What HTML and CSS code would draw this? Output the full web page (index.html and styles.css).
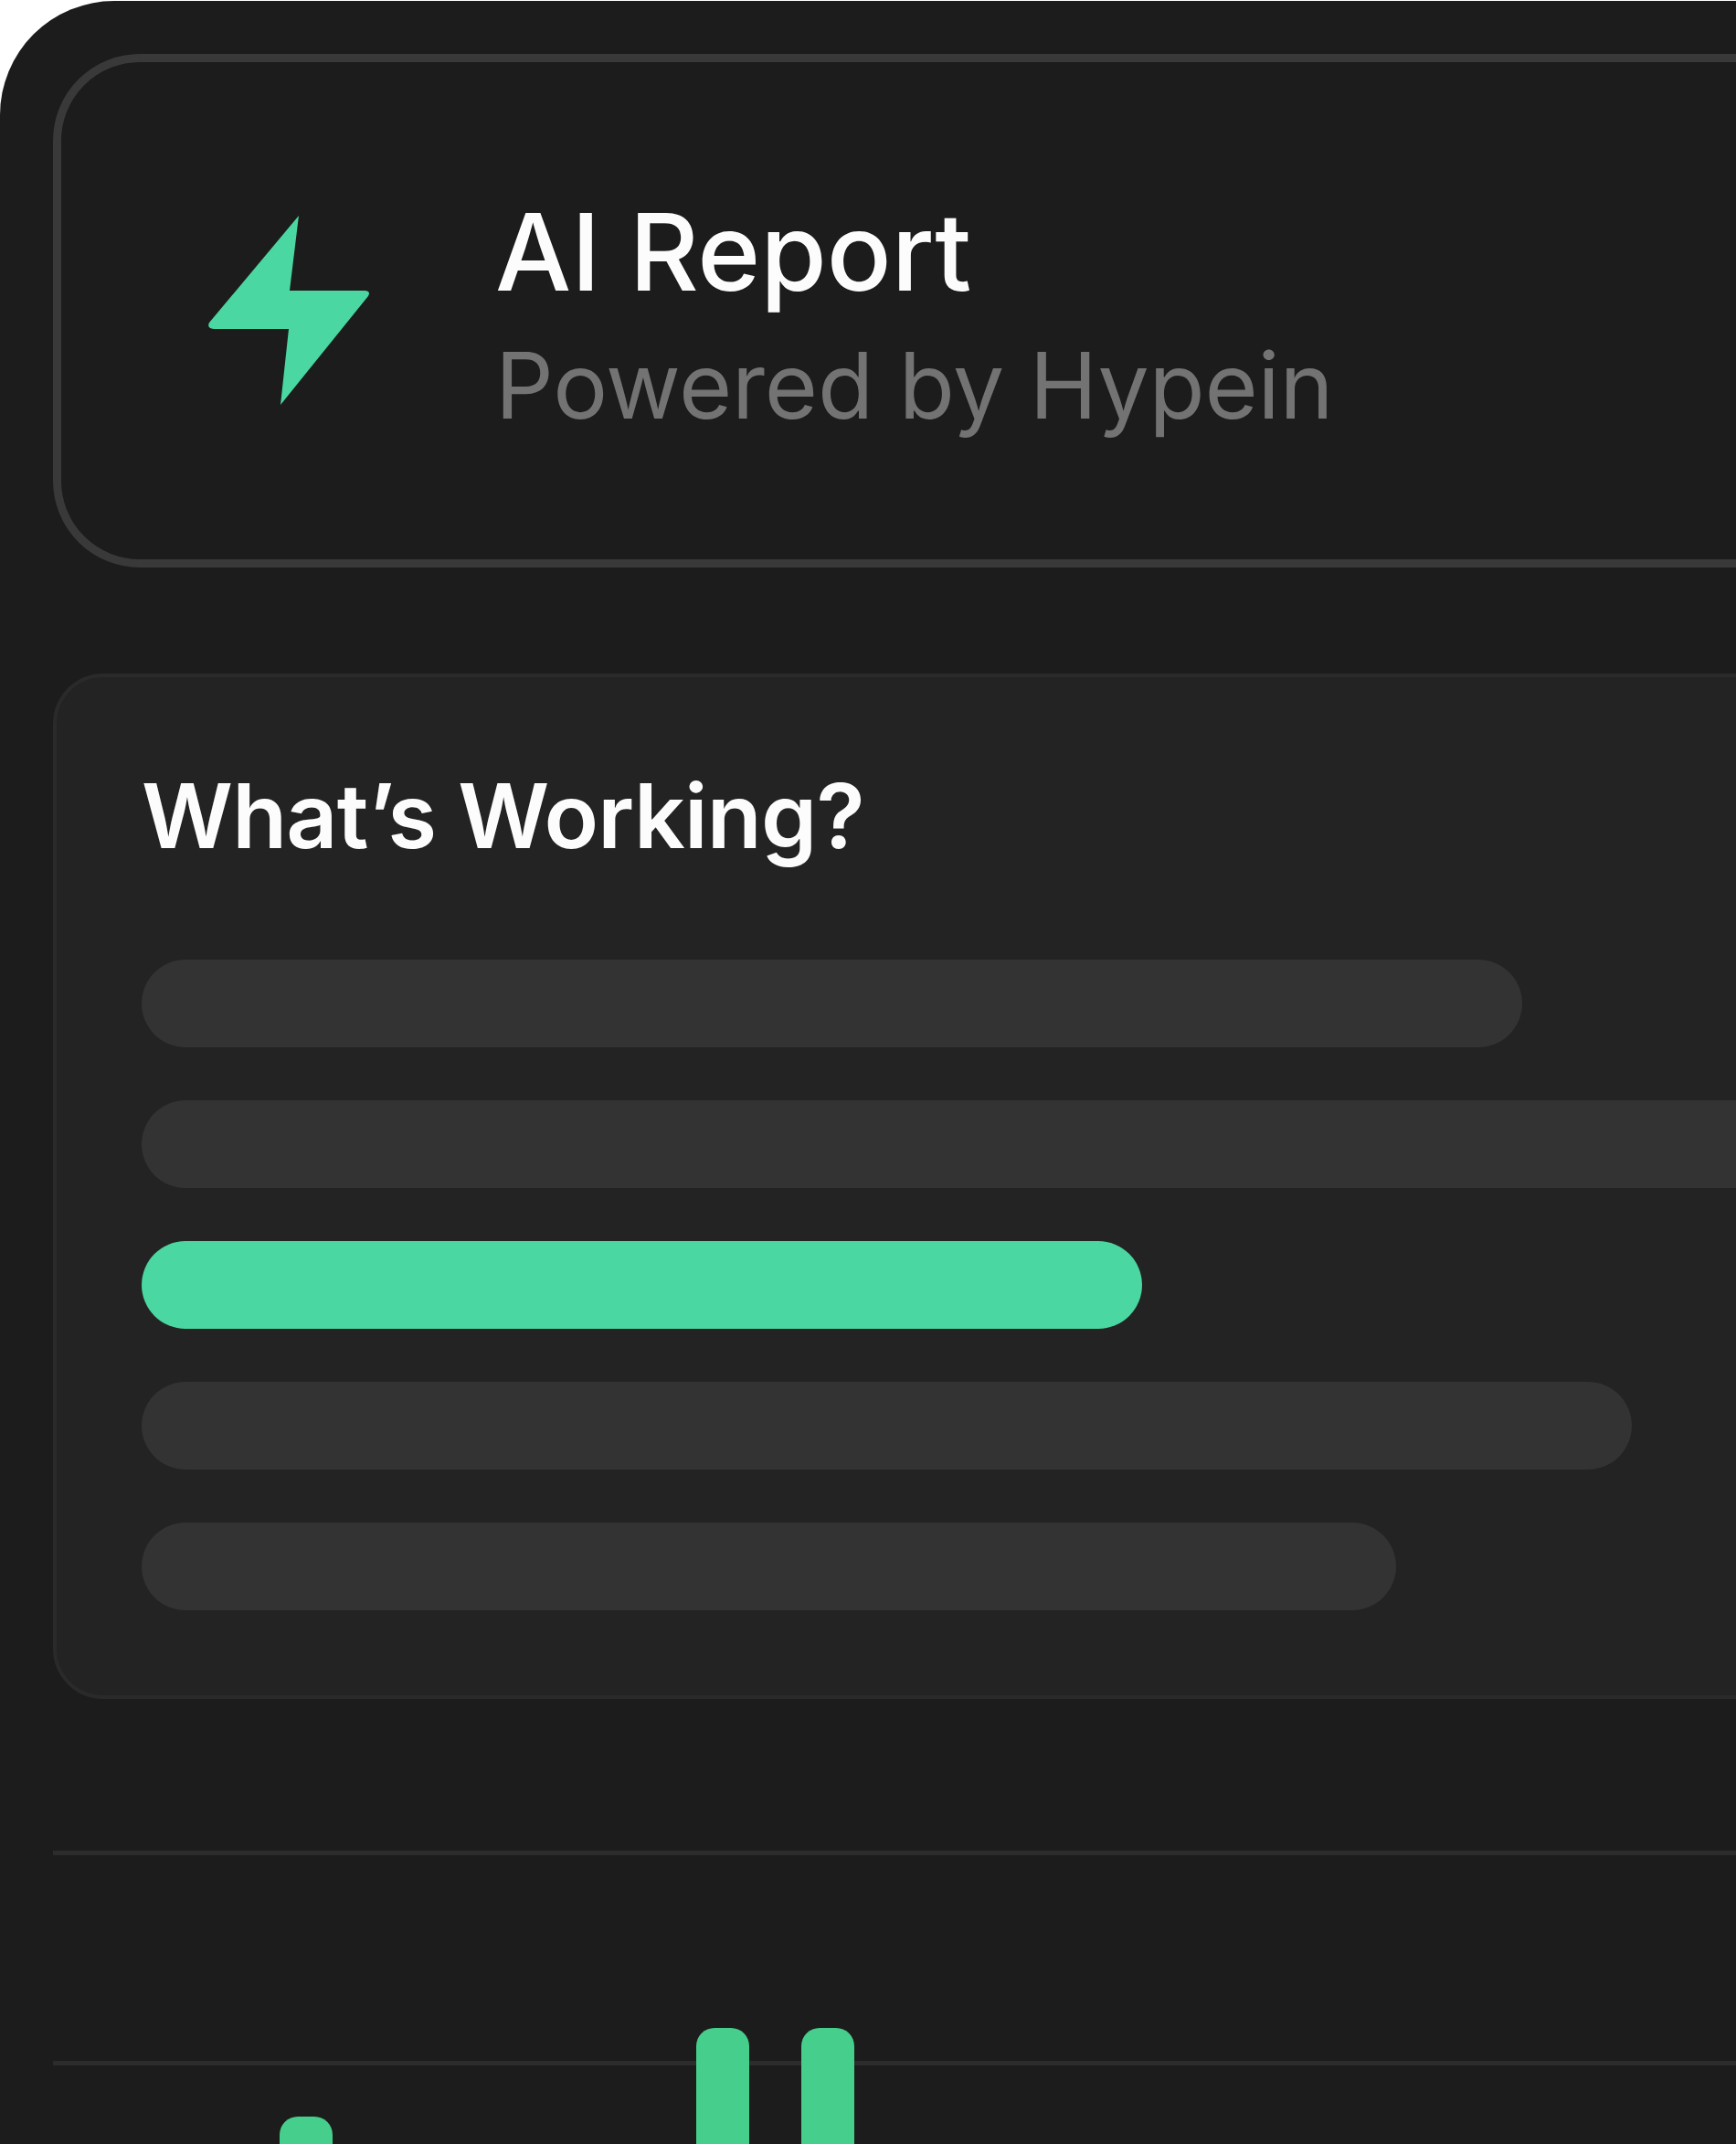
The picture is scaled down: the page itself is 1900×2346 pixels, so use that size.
FILE: index.html
```html
<!DOCTYPE html>
<html>
<head>
	<meta charset="utf-8">
	<meta name="viewport" content="width=device-width, initial-scale=1">
	<title>AI Report</title>

	<link rel="stylesheet" href="styles.css">
</head>
<body>

	<section class="panel">

		<div class="report-head">
			<svg class="bolt" viewBox="0 0 176 207" aria-hidden="true">
				<path d="M99 0 L89 82 L172 82 Q178 83 175 88 L79 207 L88 124 L6 124 Q-2 123 1 117 Z"/>
			</svg>
			<div class="report-title">
				<h1>AI Report</h1>
				<p>Powered by Hypein</p>
			</div>
		</div>

		<div class="working">
			<h2>What’s Working?</h2>
			<div class="working-bars">
				<div class="bar bar-1"></div>
				<div class="bar bar-2"></div>
				<div class="bar bar-3 active"></div>
				<div class="bar bar-4"></div>
				<div class="bar bar-5"></div>
			</div>
		</div>

		<div class="chart">
			<div class="chart-line"></div>
			<div class="chart-line"></div>
			<div class="chart-cols">
				<div class="col col-low"></div>
				<div class="col col-high"></div>
				<div class="col col-high"></div>
			</div>
		</div>

	</section>

</body>
</html>
```

FILE: styles.css
```css
* {
	margin: 0;
	padding: 0;
	box-sizing: border-box;
}

html, body {
	background-color: #fff;
	height: 100%;
	overflow: hidden;
}

body {
	font-family: "Inter", "Liberation Sans", sans-serif;
	padding-top: 1px;
}

.panel {
	background-color: #1c1c1c;
	height: 2345px;
	padding: 58px 0 0 58px;
	border-top-left-radius: 125px;
	overflow: hidden;
}

.report-head {
	display: flex;
	align-items: center;
	height: 562px;
	margin-right: -100px;
	padding-left: 161px;
	padding-bottom: 1px;
	border: 9px solid #393939;
	border-radius: 95px;
}

.bolt {
	width: 176px;
	height: 207px;
	fill: #4ad7a1;
	flex-shrink: 0;
}

.report-title {
	margin-left: 138px;
	padding-top: 8px;
}

.report-title h1 {
	font-size: 117.5px;
	font-weight: 500;
	line-height: 140px;
	color: #fcfcfc;
}

.report-title p {
	margin-top: 17px;
	font-size: 100px;
	font-weight: 400;
	line-height: 120px;
	letter-spacing: -0.2px;
	color: #737373;
}

.working {
	margin-top: 116px;
	margin-right: -100px;
	height: 1122px;
	padding: 92px 0 0 93px;
	background-color: #232323;
	border: 4px solid #2a2a2a;
	border-radius: 55px;
}

.working h2 {
	font-size: 98px;
	font-weight: 600;
	line-height: 120px;
	letter-spacing: -0.8px;
	color: #fcfcfc;
}

.working-bars {
	display: flex;
	flex-direction: column;
	gap: 58px;
	margin-top: 97px;
}

.bar {
	height: 96px;
	background-color: #333;
	border-radius: 48px;
}

.bar.active {
	background-color: #4ad7a1;
}

.bar-1 { width: 1511px; }
.bar-2 { width: 1900px; }
.bar-3 { width: 1095px; }
.bar-4 { width: 1631px; }
.bar-5 { width: 1373px; }

.chart {
	position: relative;
	margin-top: 166px;
	margin-right: -100px;
	height: 322px;
}

.chart-line {
	height: 5px;
	background-color: #2c2c2c;
	margin-bottom: 225px;
}

.chart-cols {
	position: absolute;
	left: 248px;
	bottom: 0;
	display: flex;
	align-items: flex-end;
}

.col {
	width: 58px;
	background-color: #46cf8c;
	border-radius: 20px 20px 0 0;
}

.col-low {
	height: 31px;
	margin-right: 398px;
}

.col-high {
	height: 128px;
	margin-right: 57px;
}
```
